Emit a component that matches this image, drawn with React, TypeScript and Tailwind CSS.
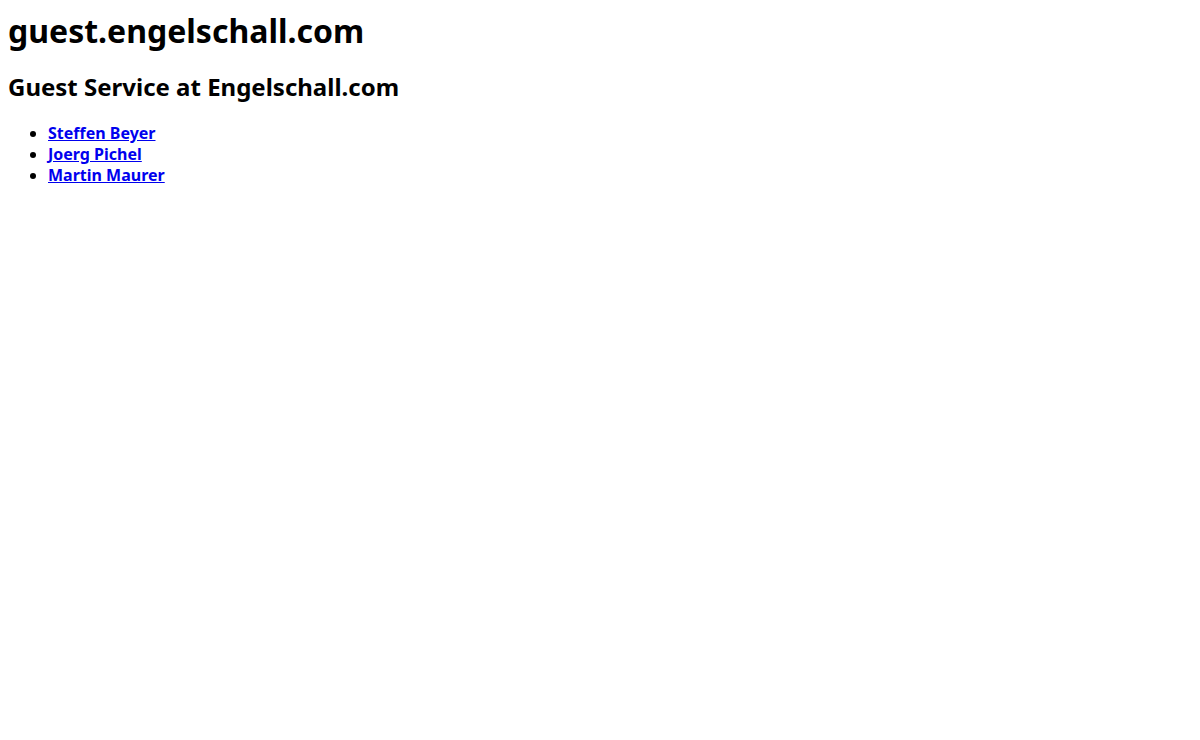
const people = ['Steffen Beyer', 'Joerg Pichel', 'Martin Maurer']

export default function App() {
  return (
    <div className="min-h-[740px] bg-white px-2 pt-[11px] text-black font-['Noto_Sans',sans-serif]">
      <h1 className="text-[32px] font-bold leading-[40px]">guest.engelschall.com</h1>
      <h2 className="mt-5 text-[24px] font-bold leading-[32px]">Guest Service at Engelschall.com</h2>
      <ul className="mt-5 list-disc pl-10 text-base font-bold leading-[21px]">
        {people.map((name) => (
          <li key={name}>
            <a href="#" className="text-[#0000ee] underline">
              {name}
            </a>
          </li>
        ))}
      </ul>
    </div>
  )
}
